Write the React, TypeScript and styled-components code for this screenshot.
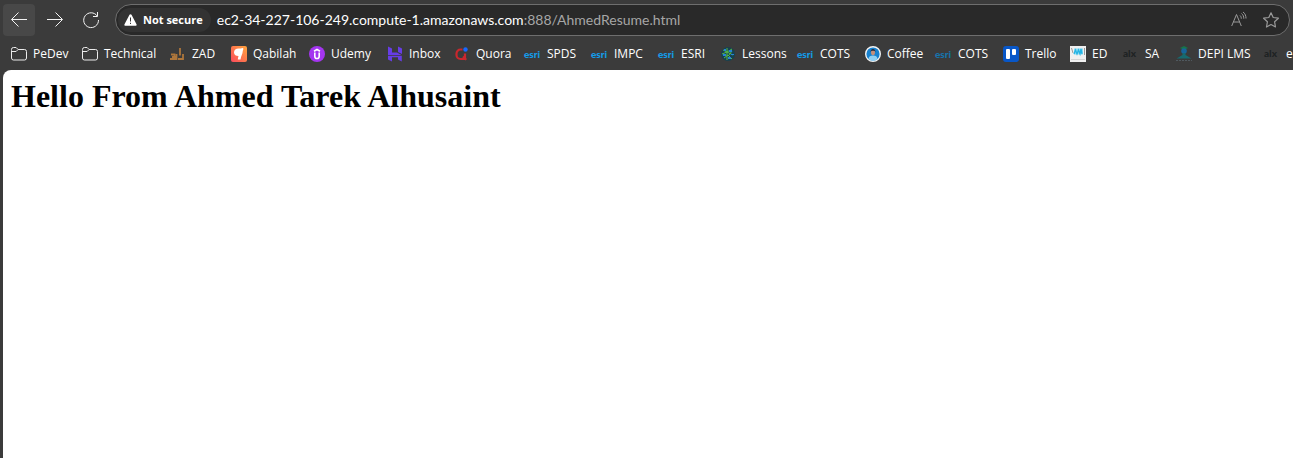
import React from 'react';
import styled, { createGlobalStyle } from 'styled-components';

const Global = createGlobalStyle`
  *, *::before, *::after { box-sizing: border-box; }
  body { margin: 0; background: #3b3b3b; }
`;

const uiFont = `"Open Sans", "Noto Sans", sans-serif`;

const Browser = styled.div`
  display: flex;
  flex-direction: column;
  min-height: 100vh;
  background: #3b3b3b;
  font-family: ${uiFont};
  color: #fff;
`;

const Toolbar = styled.header`
  display: flex;
  align-items: center;
  gap: 4px;
  padding: 4px 3px 2px;
`;

const NavButton = styled.button<{ $active?: boolean }>`
  display: flex;
  align-items: center;
  justify-content: center;
  flex: none;
  width: 32px;
  height: 32px;
  padding: 0;
  border: 0;
  border-radius: 4px;
  background: ${(p) => (p.$active ? '#484848' : 'transparent')};
  color: #f4f4f4;
`;

const AddressBar = styled.div`
  display: flex;
  align-items: center;
  flex: 1;
  min-width: 0;
  height: 32px;
  margin-left: 4px;
  padding: 0 2px;
  border: 1px solid #6e6e6e;
  border-radius: 16px;
  background: #292929;
`;

const SecurityChip = styled.button`
  display: flex;
  align-items: center;
  gap: 6px;
  flex: none;
  height: 24px;
  padding: 0 8px 0 6px;
  border: 0;
  border-radius: 12px;
  background: #333333;
  color: #fff;
  font: 700 11px/16px ${uiFont};
`;

const Url = styled.div`
  flex: 1;
  min-width: 0;
  overflow: hidden;
  padding-left: 6px;
  font-family: Lato, sans-serif;
  font-size: 14px;
  line-height: 20px;
  white-space: nowrap;
`;

const UrlPath = styled.span`
  color: #a6a6a6;
`;

const FieldButton = styled.button`
  display: flex;
  align-items: center;
  justify-content: center;
  flex: none;
  width: 32px;
  height: 24px;
  padding: 0;
  border: 0;
  background: transparent;
  color: #9a9a9a;
`;

const Bookmarks = styled.nav`
  display: flex;
  align-items: center;
  height: 32px;
  padding-left: 11px;
  overflow: hidden;
`;

const slots = { xs: 53, s: 61, m: 67, l: 71, xl: 78, xxl: 88 };
type Slot = keyof typeof slots;

const Bookmark = styled.a<{ $slot: Slot }>`
  display: flex;
  align-items: center;
  gap: 6px;
  flex: none;
  width: ${(p) => slots[p.$slot]}px;
  color: #fff;
  font-size: 12px;
  line-height: 16px;
  text-decoration: none;
  white-space: nowrap;
`;

const Page = styled.main`
  flex: 1;
  margin-left: 3px;
  padding: 8px;
  border-top-left-radius: 8px;
  background: #fff;
  color: #000;
`;

const Heading = styled.h1`
  margin: 0;
  font: 700 32px/37px "Liberation Serif", serif;
`;

const Icon = styled.svg`
  flex: none;
  overflow: visible;
`;

const Glyph = ({ children }: { children: React.ReactNode }) => (
  <Icon width="16" height="16" viewBox="0 0 16 16" fill="none" aria-hidden="true">
    {children}
  </Icon>
);

const IconText = styled.text`
  font-family: Lato, sans-serif;
  font-weight: 900;
`;

const Folder = () => (
  <Glyph>
    <path d="M.5 4.500v-1a2 2 0 0 1 2-2h2.600l2 2h6.400a2 2 0 0 1 2 2v6.500a2 2 0 0 1-2 2h-11a2 2 0 0 1-2-2zM.5 5.500h4.600l2-2" stroke="#ececec" />
  </Glyph>
);

const Zad = () => (
  <Glyph>
    <path d="M1 8.500h3.500v2.500M0 13h6.500V8M8 13h5V8M10 2v7.500M2 11h4" stroke="#ae763b" strokeWidth="1.800" />
  </Glyph>
);

const Qabilah = () => (
  <Glyph>
    <defs>
      <linearGradient id="qabilah" x1="1" y1="0" x2="0" y2="1">
        <stop stopColor="#ffa63d" />
        <stop offset="1" stopColor="#fb4a5c" />
      </linearGradient>
    </defs>
    <rect width="16" height="16" rx="2" fill="url(#qabilah)" />
    <path d="M3 6.500C3 4 5 2.500 7.500 2.500c1.500 0 2.500 0 4.500-.5 1 1-.2 2-.3 3.500 0 2.500-1.700 4-2.200 8H6.800c0-1.300.5-2.300.7-3.500C5 10 3 9 3 6.500z" fill="#fff" />
  </Glyph>
);

const Udemy = () => (
  <Glyph>
    <circle cx="8" cy="8" r="8" fill="#a435f0" />
    <path d="M5 5.200 8 3.500l3 1.700M5.800 6.500v3.700c0 1.500.9 2.300 2.200 2.300s2.200-.8 2.200-2.300V6.500" stroke="#fff" strokeWidth="1.600" />
  </Glyph>
);

const Inbox = () => (
  <Glyph>
    <path d="M1 .5l4 2v4h5l4.500 2.500H1zM11 .5l4 2v5.500l-4-2zM1 9.800h13.800V15.500l-3.800-2v-2.300H5v4.300l-4-2z" fill="#673de6" />
  </Glyph>
);

const Quora = () => (
  <Glyph>
    <path d="M8.500 3.500H6.500a4 4 0 0 0-4 4V9a4 4 0 0 0 4 4h4.500V7.500M9 10.500l3.300 3.300" stroke="#c9272d" strokeWidth="2.200" />
    <circle cx="11.500" cy="3.500" r="2.200" fill="#1769ff" />
  </Glyph>
);

const Esri = ({ dim }: { dim?: boolean }) => (
  <Glyph>
    <IconText x="-1" y="12" fontSize="10" fill={dim ? '#1673ab' : '#149be8'}>esri</IconText>
  </Glyph>
);

const Globe = () => (
  <Glyph>
    <circle cx="8" cy="8" r="7" fill="#17414f" />
    <path d="M3 4l4 2 5-3M2 8l5-2 6 3M4 12l4-3 4 4M7 2v12M12 5l-3 4" stroke="#54b948" strokeWidth="1" />
    <path d="M9 4h3v2H9zM3 8h3v2H3zM8 11h3v2H8zM4 3h2v2H4zM11 8h3v1h-3z" fill="#2583d5" />
  </Glyph>
);

const Coffee = () => (
  <Glyph>
    <circle cx="8" cy="8" r="7.300" fill="#1681cf" stroke="#f2f2f2" strokeWidth="1.400" />
    <path d="M3.500 13c0-2.500 2-3.500 4.500-3.500s4.500 1 4.500 3.500c-2.500 2.200-6.500 2.200-9 0z" fill="#8fd0f4" />
    <ellipse cx="8" cy="6.500" rx="2" ry="2.800" fill="#c68f79" />
    <path d="M5.500 6C5.500 2 10.500 2 10.500 6L9.500 4.800h-3z" fill="#252633" />
  </Glyph>
);

const Trello = () => (
  <Glyph>
    <rect width="16" height="16" rx="3" fill="#0857c8" />
    <rect x="3" y="3" width="4" height="10" rx="1" fill="#fff" />
    <rect x="9" y="3" width="4" height="6" rx="1" fill="#fff" />
  </Glyph>
);

const Ed = () => (
  <Glyph>
    <path d="M0 0h16v16H0z" fill="#f0f0f0" />
    <path d="M4 2.500h9v6H4z" fill="#8adcf4" />
    <path d="M4 8l1.500-4 1.500 4 1.500-4 1.500 4 1-5 1 5" stroke="#25b4e4" strokeWidth="1.300" />
    <path d="M1.500 2l1.500 5M14.500 2v7" stroke="#999" />
    <path d="M1 13.500h14" stroke="#d4d4d4" />
  </Glyph>
);

const Alx = () => (
  <Glyph>
    <IconText x="0" y="11" fontSize="10" fill="#1e2223">alx</IconText>
  </Glyph>
);

const Depi = () => (
  <Glyph>
    <path d="M4 2l4-2 4 2-4 2z" fill="#16764b" />
    <circle cx="8" cy="5" r="2.800" fill="#17649b" />
    <path d="M6.500 7h3v2l6 3.500H.5l6-3.500z" fill="#176a70" />
    <path d="M0 14.500h16" stroke="#50595f" strokeDasharray="2 1" />
  </Glyph>
);

const bookmarks: { label: string; icon: React.ReactNode; slot: Slot }[] = [
  { label: 'PeDev', icon: <Folder />, slot: 'l' },
  { label: 'Technical', icon: <Folder />, slot: 'xxl' },
  { label: 'ZAD', icon: <Zad />, slot: 's' },
  { label: 'Qabilah', icon: <Qabilah />, slot: 'xl' },
  { label: 'Udemy', icon: <Udemy />, slot: 'xl' },
  { label: 'Inbox', icon: <Inbox />, slot: 'm' },
  { label: 'Quora', icon: <Quora />, slot: 'l' },
  { label: 'SPDS', icon: <Esri />, slot: 'm' },
  { label: 'IMPC', icon: <Esri />, slot: 'm' },
  { label: 'ESRI', icon: <Esri />, slot: 's' },
  { label: 'Lessons', icon: <Globe />, slot: 'xl' },
  { label: 'COTS', icon: <Esri />, slot: 'm' },
  { label: 'Coffee', icon: <Coffee />, slot: 'l' },
  { label: 'COTS', icon: <Esri dim />, slot: 'm' },
  { label: 'Trello', icon: <Trello />, slot: 'm' },
  { label: 'ED', icon: <Ed />, slot: 'xs' },
  { label: 'SA', icon: <Alx />, slot: 'xs' },
  { label: 'DEPI LMS', icon: <Depi />, slot: 'xxl' },
  { label: 'e', icon: <Alx />, slot: 'xs' },
];

export default function App() {
  return (
    <Browser>
      <Global />
      <Toolbar>
        <NavButton $active aria-label="Back">
          <Glyph><path d="M16 7.500H.7M7.500.5l-7 7 7 7" stroke="currentColor" /></Glyph>
        </NavButton>
        <NavButton aria-label="Forward">
          <Glyph><path d="M0 7.500h15.300M8.500.5l7 7-7 7" stroke="currentColor" /></Glyph>
        </NavButton>
        <NavButton aria-label="Refresh">
          <Glyph><path d="M14.200 4A7.400 7.400 0 1 0 15.500 8M14.500 0v4.500H10" stroke="currentColor" /></Glyph>
        </NavButton>
        <AddressBar>
          <SecurityChip>
            <Icon width="13" height="12" viewBox="0 0 13 12" aria-hidden="true">
              <path d="M5.500.8a1.100 1.100 0 0 1 2 0l5 9.400c.4.8 0 1.600-.9 1.600H1.400c-.9 0-1.300-.8-.9-1.600z" fill="#fff" />
              <path d="M6 3.500h1v4H6zM6 8.700h1v1.300H6z" fill="#333" />
            </Icon>
            Not secure
          </SecurityChip>
          <Url>
            ec2-34-227-106-249.compute-1.amazonaws.com<UrlPath>:888/AhmedResume.html</UrlPath>
          </Url>
          <FieldButton aria-label="Read aloud">
            <Glyph><path d="M.7 14L5.500 2.500 10.300 14M2.300 10h6.400M9 3.500c1 .8 1.300 2 1.300 3.200M10.500 1.500c1.700 1.200 2.300 3.200 2.300 5.200M12 0c2.300 1.500 3 4 3 6.500" stroke="currentColor" /></Glyph>
          </FieldButton>
          <FieldButton aria-label="Add to favorites">
            <Glyph><path d="M8 .8l2.200 4.700 5.200.7-3.800 3.600.9 5.200L8 12.500 3.500 15l.9-5.200L.6 6.200l5.200-.7z" stroke="currentColor" strokeWidth="1.200" strokeLinejoin="round" /></Glyph>
          </FieldButton>
        </AddressBar>
      </Toolbar>
      <Bookmarks aria-label="Favorites">
        {bookmarks.map((b, i) => (
          <Bookmark key={i} href="#" $slot={b.slot}>
            {b.icon}
            {b.label}
          </Bookmark>
        ))}
      </Bookmarks>
      <Page>
        <Heading>Hello From Ahmed Tarek Alhusaint</Heading>
      </Page>
    </Browser>
  );
}
